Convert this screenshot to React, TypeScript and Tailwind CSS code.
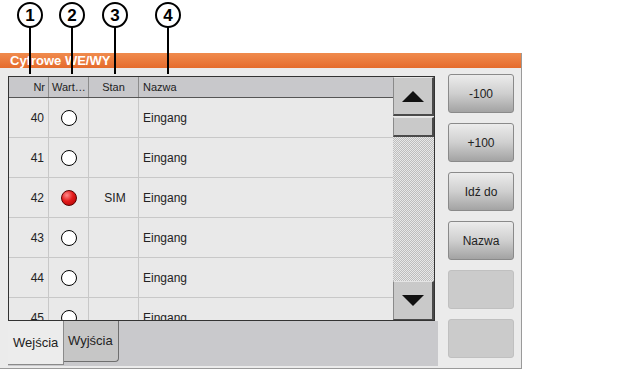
import React from "react";

type Row = { nr: number; on: boolean; stan: string; name: string };

const rows: Row[] = [
  { nr: 40, on: false, stan: "", name: "Eingang" },
  { nr: 41, on: false, stan: "", name: "Eingang" },
  { nr: 42, on: true, stan: "SIM", name: "Eingang" },
  { nr: 43, on: false, stan: "", name: "Eingang" },
  { nr: 44, on: false, stan: "", name: "Eingang" },
  { nr: 45, on: false, stan: "", name: "Eingang" },
];

const callouts = [
  { n: 1, cls: "left-[17px]", line: "left-[29px]" },
  { n: 2, cls: "left-[59px]", line: "left-[71px]" },
  { n: 3, cls: "left-[102px]", line: "left-[114px]" },
  { n: 4, cls: "left-[155px]", line: "left-[167px]" },
];

function Callout({ n, cls, line }: { n: number; cls: string; line: string }) {
  return (
    <>
      <div className={`absolute top-[27px] h-[47px] w-[2px] bg-black z-10 ${line}`} />
      <div
        className={`absolute top-[2px] w-[26px] h-[26px] rounded-full border-2 border-black bg-white flex items-center justify-center text-[17px] font-bold text-black leading-none z-10 ${cls}`}
      >
        {n}
      </div>
    </>
  );
}

function SideButton({ label }: { label?: string }) {
  if (!label) {
    return <div className="w-[66px] h-[39px] rounded-[3px] border border-[#c0c0c0] bg-[#cbcbcb]" />;
  }
  return (
    <div className="w-[66px] h-[39px] rounded-[3px] border border-[#8a8a8a] bg-gradient-to-b from-[#ececec] via-[#cfcfcf] to-[#a3a3a3] flex items-center justify-center text-[12px] text-[#222]">
      {label}
    </div>
  );
}

export default function App() {
  return (
    <div className="relative w-[623px] h-[370px] bg-white overflow-hidden font-['Liberation_Sans',Arial,sans-serif]">
      {callouts.map((c) => (
        <Callout key={c.n} {...c} />
      ))}
      <div className="pt-[53px]">
        <div className="w-[522px] h-[316px] flex flex-col border-r border-b border-[#9a9a9a] bg-[#ebebeb]">
          <div className="h-[15px] bg-gradient-to-b from-[#f08b4d] to-[#e56b2c] pl-[10px] text-white font-bold text-[13px] leading-[15px]">
            Cyfrowe WE/WY
          </div>
          <div className="flex flex-1">
            <div className="w-[438px] pl-[8px] pt-[8px] flex flex-col">
              {/* Table frame */}
              <div className="w-[427px] h-[245px] border border-[#333] flex bg-[#e9e9e9]">
                <div className="flex-1 flex flex-col overflow-hidden">
                  <div className="h-[21px] shrink-0 flex bg-[#c8c8cb] border-b border-[#555] text-[11px] text-[#222] leading-[20px]">
                    <div className="w-[40px] border-r border-[#8c8c8c] text-right pr-[3px]">Nr</div>
                    <div className="w-[40px] border-r border-[#8c8c8c] pl-[3px] whitespace-nowrap overflow-hidden">Wart…</div>
                    <div className="w-[50px] border-r border-[#8c8c8c] text-center">Stan</div>
                    <div className="flex-1 pl-[4px]">Nazwa</div>
                  </div>
                  <div className="flex-1 overflow-hidden">
                    {rows.map((r) => (
                      <div key={r.nr} className="h-[40px] shrink-0 flex border-b border-[#c8c8c8] text-[12px] text-[#222]">
                        <div className="w-[40px] border-r border-[#c8c8c8] flex items-center justify-end pr-[4px]">{r.nr}</div>
                        <div className="w-[40px] border-r border-[#c8c8c8] flex items-center justify-center">
                          {r.on ? (
                            <div className="w-[16px] h-[16px] rounded-full border border-[#5a0000] bg-[radial-gradient(circle_at_35%_30%,#ff8a8a_0%,#e41b1b_45%,#a80000_100%)]" />
                          ) : (
                            <div className="w-[16px] h-[16px] rounded-full border border-black bg-white" />
                          )}
                        </div>
                        <div className="w-[50px] border-r border-[#c8c8c8] flex items-center justify-center pl-[3px]">{r.stan}</div>
                        <div className="flex-1 flex items-center pl-[4px]">{r.name}</div>
                      </div>
                    ))}
                  </div>
                </div>
                {/* Scrollbar */}
                <div className="w-[41px] flex flex-col">
                  <div className="h-[39px] bg-[#c9c9c9] border-t border-l border-t-[#e4e4e4] border-l-[#8a8a8a] border-r-2 border-b-2 border-r-[#4a4a4a] border-b-[#4a4a4a] flex items-center justify-center">
                    <svg width="22" height="11" viewBox="0 0 22 11">
                      <polygon points="11,0 22,11 0,11" fill="#111" />
                    </svg>
                  </div>
                  <div className="h-[1px]" />
                  <div className="h-[20px] bg-[#c9c9c9] border-t border-l border-t-[#e4e4e4] border-l-[#8a8a8a] border-r-2 border-b-2 border-r-[#4a4a4a] border-b-[#4a4a4a]" />
                  <div className="flex-1 bg-[repeating-conic-gradient(#bdbdbd_0_25%,#e8e8e8_0_50%)] bg-[length:2px_2px]" />
                  <div className="h-[39px] bg-[#c9c9c9] border-t border-l border-t-[#e4e4e4] border-l-[#8a8a8a] border-r-2 border-b border-r-[#4a4a4a] border-b-[#4a4a4a] flex items-center justify-center">
                    <svg width="22" height="11" viewBox="0 0 22 11">
                      <polygon points="0,0 22,0 11,11" fill="#111" />
                    </svg>
                  </div>
                </div>
              </div>
              {/* Tabs */}
              <div className="w-[430px] h-[45px] flex bg-[#c9c9cc] text-[13px] text-[#222]">
                <div className="w-[56px] h-[44px] bg-[#ececec] border-r border-b border-[#8a8a8a] flex items-center pl-[5px]">
                  Wejścia
                </div>
                <div className="w-[55px] h-[41px] bg-[#c6c6c6] border-r border-b border-[#6f6f6f] rounded-br-[4px] flex items-center pl-[4px]">
                  Wyjścia
                </div>
              </div>
            </div>
            <div className="flex flex-col pl-[10px] pt-[6px] gap-[10px]">
              <SideButton label="-100" />
              <SideButton label="+100" />
              <SideButton label="Idź do" />
              <SideButton label="Nazwa" />
              <SideButton />
              <SideButton />
            </div>
          </div>
        </div>
      </div>
    </div>
  );
}
